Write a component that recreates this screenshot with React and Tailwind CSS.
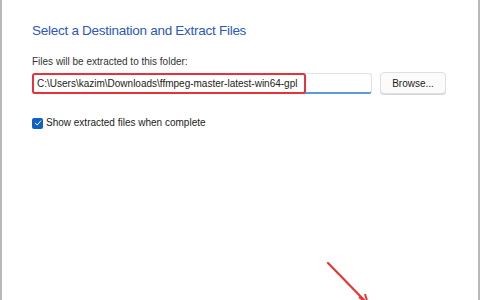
export default function App() {
  return (
    <div
      className="relative w-[480px] h-[300px] bg-white overflow-hidden border-l-2 border-r-2 border-[#b9b9b9]"
      style={{ fontFamily: '"Liberation Sans", Arial, sans-serif' }}
    >
      <div className="pl-[30px] pt-[21px]">
        <h1 className="text-[13.5px] leading-[20px] text-[#2a59b8] tracking-[-0.27px]">Select a Destination and Extract Files</h1>

        <p className="mt-[14px] text-[10px] leading-[14px] text-[#333]">Files will be extracted to this folder:</p>

        <div className="mt-[3px] flex items-center">
          <div className="flex w-[340px] h-[21px] border border-[#e3e3e3] border-b-2 border-b-[#5b9bd5] rounded-[3px] bg-white">
            <span className="-ml-px -mt-px h-[21px] pl-[3px] pr-[7px] rounded-[3px] border-2 border-[#e5323b] text-[10px] leading-[17px] text-[#222] whitespace-nowrap">
              C:\Users\kazim\Downloads\ffmpeg-master-latest-win64-gpl
            </span>
          </div>
          <button className="ml-[8px] w-[66px] h-[22px] rounded-[4px] border border-[#e0e0e0] bg-[#fbfbfb] text-[10px] text-[#222] shadow-[0_1px_0_#d6d6d6]">
            Browse...
          </button>
        </div>

        <label className="mt-[22px] flex items-center gap-[3px] text-[10px] leading-[14px] text-[#222]">
          <span className="w-[11px] h-[11px] rounded-[2px] bg-[#0f62c4] flex items-center justify-center">
            <svg width="8" height="8" viewBox="0 0 8 8" fill="none">
              <path d="M1.3 4.2 L3.2 6 L6.8 1.9" stroke="white" strokeWidth="1" strokeLinecap="round" strokeLinejoin="round" />
            </svg>
          </span>
          Show extracted files when complete
        </label>
      </div>

      <svg className="absolute left-0 top-0" width="480" height="300" viewBox="0 0 480 300">
        <line x1="326" y1="263" x2="364" y2="302" stroke="#e53935" strokeWidth="2.2" strokeLinecap="round" />
        <path d="M357 297 L366 304 L363 294" fill="none" stroke="#e53935" strokeWidth="2" />
      </svg>
    </div>
  );
}
